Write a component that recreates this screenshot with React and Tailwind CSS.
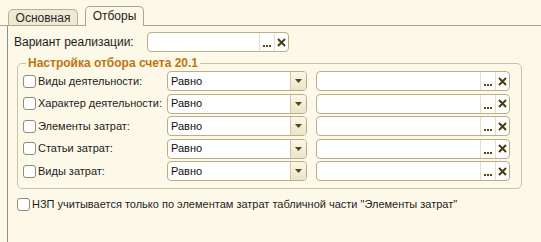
import React from 'react';

const rows = [
    'Виды деятельности:',
    'Характер деятельности:',
    'Элементы затрат:',
    'Статьи затрат:',
    'Виды затрат:',
];

const Check = () => (
    <span className="w-[13px] h-[13px] shrink-0 rounded-[3px] border border-[#8e8b7c] bg-white" />
);

const PickButtons = () => (
    <div className="flex h-full items-stretch">
        <div className="w-[15px] border-l border-[#e4dfc8] flex items-end justify-center pb-[4px] gap-[1px]">
            <span className="w-[2px] h-[2px] bg-[#5a4a10]" />
            <span className="w-[2px] h-[2px] bg-[#5a4a10]" />
            <span className="w-[2px] h-[2px] bg-[#5a4a10]" />
        </div>
        <div className="w-[14px] border-l border-[#e4dfc8] flex items-center justify-center">
            <svg width="9" height="9" viewBox="0 0 9 9">
                <path d="M1 1 L8 8 M8 1 L1 8" stroke="#4a3c0c" strokeWidth="2" />
            </svg>
        </div>
    </div>
);

const PickInput = ({ width }) => (
    <div className={`${width} h-[20px] flex rounded-[4px] border border-[#b9ae86] bg-white overflow-hidden`}>
        <div className="flex-1" />
        <PickButtons />
    </div>
);

const Select = () => (
    <div className="w-[140px] h-[20px] flex rounded-[4px] border border-[#b9ae86] bg-white overflow-hidden">
        <div className="flex-1 flex items-center pl-[3px] text-[#111]">Равно</div>
        <div className="w-[16px] border-l border-[#cfc7a6] bg-gradient-to-b from-[#fbf8ea] to-[#ebe4c8] flex items-center justify-center">
            <svg width="7" height="4" viewBox="0 0 7 4">
                <path d="M0 0 H7 L3.5 4 Z" fill="#5a4710" />
            </svg>
        </div>
    </div>
);

export default function App() {
    return (
        <div
            className="w-[541px] h-[242px] bg-[#fcf9e9] text-[11px] text-[#1c1c1c] overflow-hidden flex flex-col"
            style={{ fontFamily: '"Liberation Sans", Arial, sans-serif' }}
        >
            {/* Tabs */}
            <div className="h-[26px] flex items-end pl-[7px] border-b border-[#aaa68f] shrink-0">
                <div className="ml-[1px] w-[70px] h-[16px] rounded-t-[5px] border border-b-0 border-[#b3ae95] bg-[#eee9d2] flex items-center justify-center text-[#2a2a2a] text-[12px]">
                    Основная
                </div>
                <div className="ml-[7px] w-[59px] h-[20px] -mb-px rounded-t-[5px] border border-b-0 border-[#aaa68f] bg-[#fcf9e9] flex items-center justify-center pb-[1px] text-[12px]">
                    Отборы
                </div>
            </div>

            {/* Panel */}
            <div className="flex-1 ml-[7px] border-l border-[#8f8f88] pt-[6px]">
                <div className="flex items-center h-[20px]">
                    <span className="ml-[6px] w-[133px] text-[12px]">Вариант реализации:</span>
                    <PickInput width="w-[142px]" />
                </div>

                <fieldset className="ml-[9px] mt-[4px] w-[504px] rounded-[5px] border border-[#c9c3a6] pl-[5px] pr-[11px] pb-[7px]">
                    <legend className="ml-[3px] px-[2px] font-bold text-[#bf740f] text-[12px] leading-[14px]">
                        Настройка отбора счета 20.1
                    </legend>
                    <div className="flex flex-col gap-[2.5px] pt-[1px]">
                        {rows.map((r) => (
                            <div key={r} className="flex items-center h-[20px]">
                                <Check />
                                <span className="ml-[2px] w-[129px] whitespace-nowrap">{r}</span>
                                <Select />
                                <div className="ml-[9px]">
                                    <PickInput width="w-[194px]" />
                                </div>
                            </div>
                        ))}
                    </div>
                </fieldset>

                <div className="flex items-center mt-[7px] ml-[9px]">
                    <Check />
                    <span className="ml-[2px] whitespace-nowrap">
                        НЗП учитывается только по элементам затрат табличной части "Элементы затрат"
                    </span>
                </div>
            </div>
        </div>
    );
}
